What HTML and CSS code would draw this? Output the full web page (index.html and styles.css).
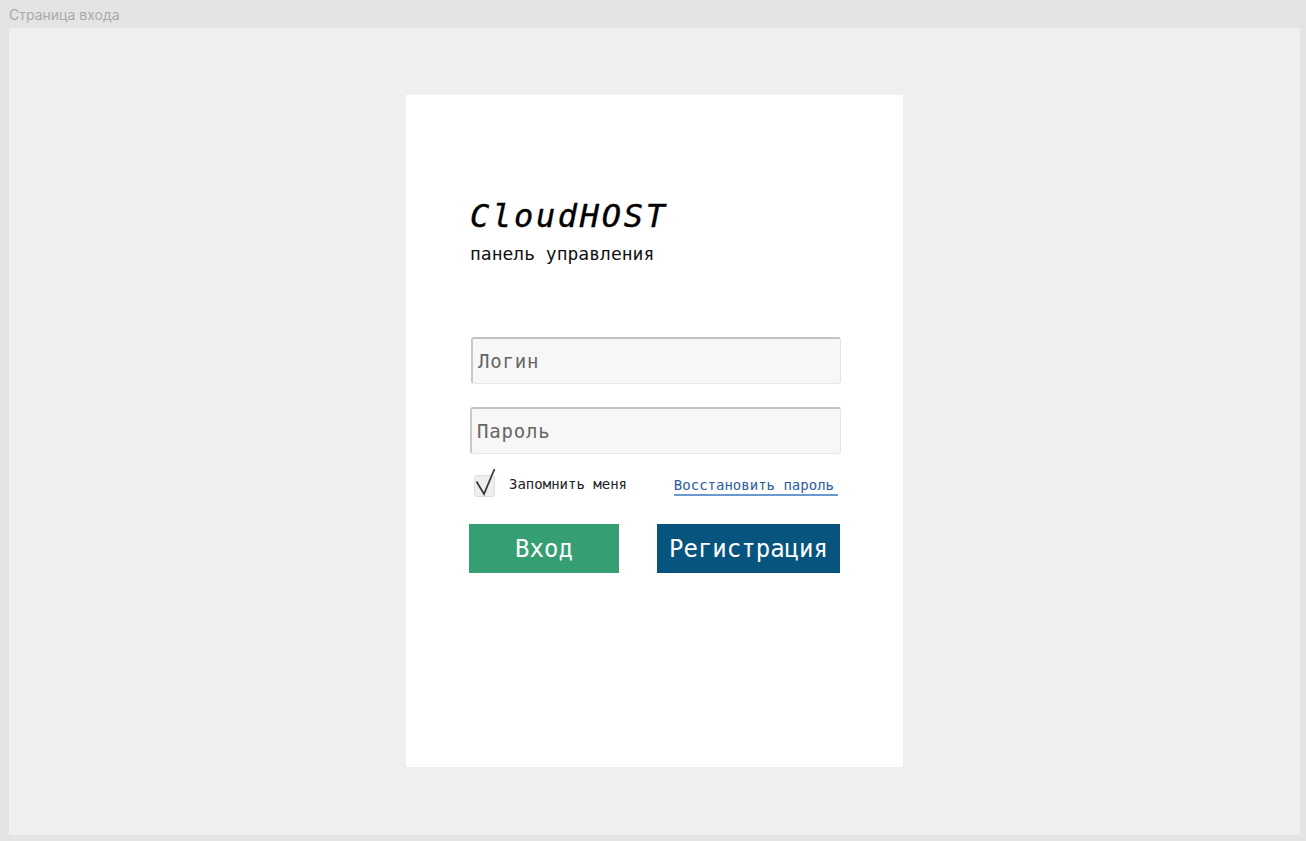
FILE: index.html
```html
<!DOCTYPE html>
<html lang="ru">
<head>
<meta charset="utf-8">
<title>Страница входа</title>
<link rel="stylesheet" href="styles.css">
</head>
<body>
<div class="topbar">Страница входа</div>
<main class="frame">
  <section class="card">
    <h1 class="brand">CloudHOST</h1>
    <div class="subtitle">панель управления</div>
    <form class="form">
      <input class="field field-login" type="text" placeholder="Логин">
      <input class="field field-pass" type="password" placeholder="Пароль">
      <div class="options">
        <label class="remember">
          <span class="box">
            <svg class="tick" width="24" height="30" viewBox="0 0 24 30"><path d="M2.5 14.5 L10 27 L20.5 2" fill="none" stroke="#3a3a3a" stroke-width="1.8" stroke-linejoin="miter"/></svg>
          </span>
          <span class="remember-text">Запомнить меня</span>
        </label>
        <a class="restore" href="#">Восстановить пароль</a>
      </div>
      <div class="buttons">
        <button class="btn btn-login" type="button">Вход</button>
        <button class="btn btn-reg" type="button">Регистрация</button>
      </div>
    </form>
  </section>
</main>
</body>
</html>
```
FILE: styles.css
```css
html, body {
  margin: 0;
  padding: 0;
}
body {
  background: #e4e4e4;
  width: 1306px;
  height: 841px;
  overflow: hidden;
}
.topbar {
  height: 28px;
  line-height: 30px;
  padding-left: 9px;
  font-family: "Inter", "Liberation Sans", sans-serif;
  font-size: 14px;
  color: #a9a9a9;
}
.frame {
  margin: 0 6px 0 9px;
  height: 807px;
  background: #efefef;
  padding-top: 67px;
  box-sizing: border-box;
  display: flex;
  justify-content: center;
  align-items: flex-start;
}
.card {
  width: 497px;
  height: 672px;
  background: #ffffff;
  box-sizing: border-box;
  padding: 103px 62px 0 64px;
  font-family: "DejaVu Sans Mono", "Liberation Mono", monospace;
}
.brand {
  margin: 0;
  font-size: 32px;
  line-height: 37px;
  font-weight: normal;
  font-style: italic;
  letter-spacing: 2.7px;
  color: #000;
  -webkit-text-stroke: 0.4px #000;
}
.subtitle {
  margin-top: 8px;
  font-size: 18px;
  line-height: 22px;
  color: #111;
}
.form {
  margin-top: 72px;
  display: flex;
  flex-direction: column;
}
.field {
  box-sizing: border-box;
  width: 371px;
  height: 47px;
  background: #f7f7f7;
  border-style: solid;
  border-width: 2px 1px 1px 2px;
  border-color: #c2c2c2 #e4e4e4 #e8e8e8 #c8c8c8;
  border-radius: 3px;
  padding: 0 0 0 5px;
  font-family: "DejaVu Sans Mono", "Liberation Mono", monospace;
  font-size: 19px;
  letter-spacing: 0.8px;
  color: #333;
  outline: none;
}
.field::placeholder {
  color: #666;
}
.field-login {
  margin-left: 1px;
  width: 370px;
}
.field-pass {
  margin-top: 23px;
}
.options {
  margin-top: 17px;
  height: 26px;
  display: flex;
  align-items: center;
  justify-content: space-between;
  padding-right: 3px;
}
.remember {
  display: flex;
  align-items: center;
  margin-left: 4px;
}
.box {
  position: relative;
  width: 19px;
  height: 20px;
  margin-top: 4px;
  background: #eeeeee;
  border: 1px solid #dedede;
  border-radius: 3px;
}
.tick {
  position: absolute;
  left: -1px;
  top: -9px;
}
.remember-text {
  margin-left: 14px;
  font-size: 14px;
  color: #222;
}
.restore {
  font-size: 14px;
  color: #2b5c9c;
  text-decoration: none;
  border-bottom: 2px solid #6a98cf;
  padding: 0 4px 1px 0;
  margin-top: 4px;
}
.buttons {
  margin-top: 27px;
  display: flex;
  gap: 38px;
  margin-left: -1px;
}
.btn {
  height: 49px;
  border: none;
  color: #fff;
  font-family: "DejaVu Sans Mono", "Liberation Mono", monospace;
  font-size: 24px;
  padding: 0;
}
.btn-login {
  width: 150px;
  background: #369e73;
}
.btn-reg {
  width: 183px;
  background: #07547f;
}
```
